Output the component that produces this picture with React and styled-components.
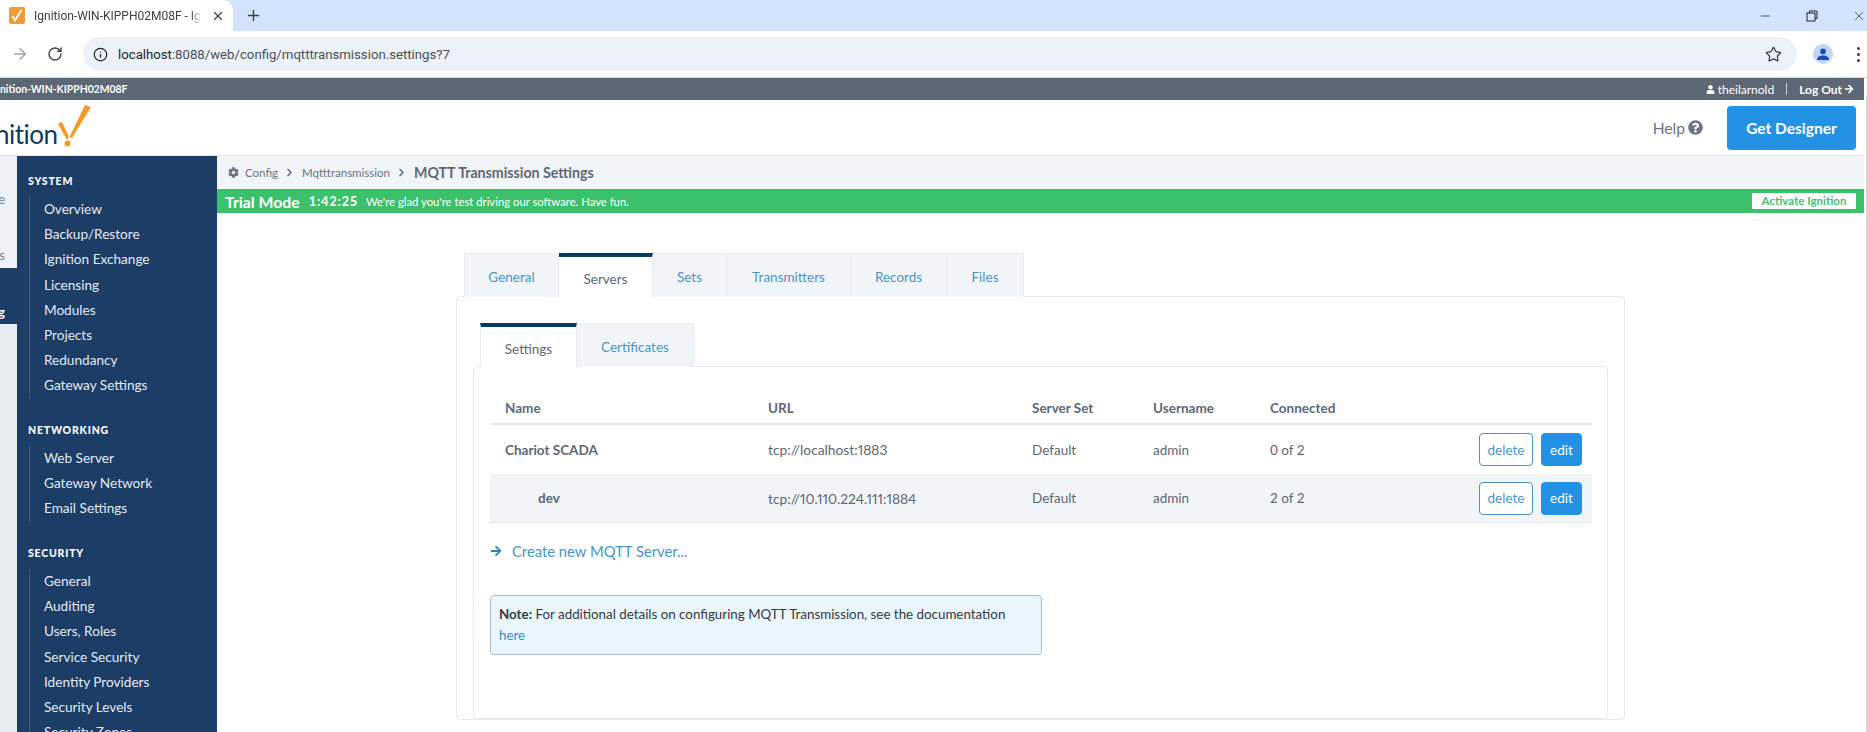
import styled, { createGlobalStyle } from "styled-components";
import { FaCog, FaUser, FaQuestionCircle, FaArrowRight, FaChevronRight } from "react-icons/fa";
import { ArrowRight, RotateCw, Info, Star, X, Plus, Minus } from "lucide-react";

const GlobalStyle = createGlobalStyle`
  html, body {
    margin: 0;
    height: 732px;
    overflow: hidden;
    background: #fff;
    font-family: "Lato", "Liberation Sans", sans-serif;
    color: #5d6776;
  }
  * { box-sizing: border-box; }
`;

const Window = styled.div`
  width: 1867px;
  height: 732px;
  overflow: hidden;
  display: flex;
  flex-direction: column;
`;

const TabStrip = styled.div`
  height: 31px;
  flex: none;
  background: #d3e3fd;
  display: flex;
  align-items: center;
`;

const BrowserTab = styled.div`
  width: 233px;
  height: 31px;
  background: #fff;
  border-top-right-radius: 10px;
  display: flex;
  align-items: center;
  padding: 0 9px;
  color: #3c4043;
  font: 12px "Roboto", sans-serif;
`;

const Favicon = styled.div`
  width: 16px;
  height: 17px;
  flex: none;
  border-radius: 2px;
  background: #ee9b3a;
  color: #fff;
  display: flex;
  align-items: center;
  justify-content: center;
  margin-right: 9px;
`;

const TabTitle = styled.span`
  width: 167px;
  flex: none;
  white-space: nowrap;
  overflow: hidden;
  mask-image: linear-gradient(to left, transparent, #000 10px);
`;

const TabClose = styled(X)`
  margin-left: 10px;
  flex: none;
`;

const NewTab = styled(Plus)`
  margin-left: 12px;
  color: #3c4043;
`;

const WindowControls = styled.div`
  margin-left: auto;
  display: flex;
  align-items: center;
  gap: 34px;
  padding-right: 1px;
  color: #202124;
`;

const Toolbar = styled.div`
  height: 47px;
  flex: none;
  background: #fff;
  border-bottom: 1px solid #d5d9de;
  display: flex;
  align-items: center;
  padding-left: 11px;
`;

const ForwardIcon = styled(ArrowRight)`
  color: #a0a4a9;
  flex: none;
`;

const ReloadIcon = styled(RotateCw)`
  color: #45494e;
  margin-left: 18px;
  flex: none;
`;

const UrlPill = styled.div`
  margin-left: 20px;
  width: 1714px;
  flex: none;
  height: 34px;
  border-radius: 17px;
  background: #edf2fa;
  display: flex;
  align-items: center;
  padding: 0 15px 0 10px;
  font: 13.2px "Roboto", sans-serif;
  color: #1f2328;
`;

const UrlHost = styled.span`
  margin-left: 10px;
`;

const UrlPath = styled.span`
  color: #4a4f55;
`;

const StarIcon = styled(Star)`
  margin-left: auto;
  color: #3c4043;
`;

const Avatar = styled.div`
  width: 20px;
  height: 20px;
  margin-left: 16px;
  border-radius: 50%;
  background: #c2d7f8;
  color: #0f4fc0;
  display: flex;
  align-items: center;
  justify-content: center;
  flex: none;
`;

const Kebab = styled.div`
  margin-left: 24px;
  display: flex;
  flex-direction: column;
  gap: 3px;
  flex: none;

  i {
    width: 3px;
    height: 3px;
    border-radius: 50%;
    background: #3c4043;
  }
`;

const PageRow = styled.div`
  flex: 1;
  min-height: 0;
  display: flex;
`;

const Page = styled.div`
  flex: 1;
  min-width: 0;
  display: flex;
  flex-direction: column;
`;

const ScrollTrack = styled.div`
  width: 3px;
  flex: none;
  margin-top: 17px;
  border-right: 1px solid #d8dce1;
`;

const StatusBar = styled.div`
  height: 22px;
  flex: none;
  background: #5d6776;
  color: #fff;
  font-size: 10.4px;
  font-weight: 700;
  display: flex;
  align-items: center;
  justify-content: space-between;
  padding-right: 10px;
`;

const UserArea = styled.div`
  display: flex;
  align-items: center;
  font-size: 12px;
`;

const UserName = styled.span`
  margin-left: 3px;
  font-weight: 400;
`;

const Divider = styled.span`
  width: 1px;
  height: 12px;
  background: #c9ced6;
  margin: 0 12px;
`;

const LogOut = styled.span`
  margin-right: 2px;
`;

const Header = styled.div`
  height: 56px;
  flex: none;
  background: #fff;
  border-bottom: 1px solid #dfe3e8;
  display: flex;
  align-items: center;
  padding-right: 8px;
`;

const Logo = styled.div`
  display: flex;
  align-items: flex-end;
  height: 50px;
  margin-left: -5px;
  color: #123a5e;
  font-size: 26px;
  line-height: 38px;
  letter-spacing: -0.5px;
`;

const LogoMark = styled.svg`
  align-self: flex-start;
  flex: none;
`;

const HelpLink = styled.div`
  margin-left: auto;
  display: flex;
  align-items: center;
  gap: 3px;
  font-size: 15.6px;
  color: #6b7480;
`;

const DesignerButton = styled.div`
  margin-left: 24px;
  width: 129px;
  height: 44px;
  border-radius: 4px;
  background: #2492e4;
  color: #fff;
  font-size: 15.5px;
  font-weight: 700;
  display: flex;
  align-items: center;
  justify-content: center;
`;

const Main = styled.div`
  flex: 1;
  min-height: 0;
  display: flex;
`;

const Rail = styled.div`
  width: 17px;
  flex: none;
  background: #e8edf2;
  display: flex;
  flex-direction: column;
  overflow: hidden;
`;

const RailItem = styled.div`
  height: ${(p) => p.$h}px;
  background: ${(p) => (p.$active ? "#1b3d66" : "#eef1f5")};
  color: ${(p) => (p.$active ? "#fff" : "#7a8390")};
  font-size: 13px;
  font-weight: ${(p) => (p.$active ? 700 : 400)};
  display: flex;
  justify-content: flex-end;
  align-items: ${(p) => (p.$active ? "flex-end" : "center")};
  padding-right: 12px;
  padding-bottom: ${(p) => (p.$active ? 4 : 0)}px;
  white-space: nowrap;
`;

const Sidebar = styled.div`
  width: 200px;
  flex: none;
  background: #1b3d66;
  overflow: hidden;
  padding: 15px 0 0 11px;
`;

const NavGroup = styled.div`
  margin-bottom: 21.5px;
`;

const NavHeading = styled.div`
  color: #fff;
  font-size: 10.5px;
  font-weight: 900;
  letter-spacing: 0.8px;
  line-height: 20px;
`;

const NavList = styled.div`
  margin: 6px 0 0 1px;
  border-left: 1px solid #3f5d82;
  padding-left: 14px;
`;

const NavItem = styled.div`
  height: 25.2px;
  line-height: 25.2px;
  font-size: 13.6px;
  color: #e4eaf1;
`;

const Content = styled.div`
  flex: 1;
  min-width: 0;
  display: flex;
  flex-direction: column;
`;

const Breadcrumb = styled.div`
  height: 33px;
  flex: none;
  background: #f2f5f8;
  display: flex;
  align-items: center;
  padding-left: 11px;
  font-size: 11.5px;
  color: #6b7480;
`;

const Crumb = styled.span`
  margin-left: ${(p) => p.$gap || 0}px;
`;

const CrumbArrow = styled(FaChevronRight)`
  font-size: 9px;
  margin: 0 8px 0 7px;
  color: #5d6776;
`;

const CrumbTitle = styled.span`
  font-size: 14.2px;
  font-weight: 700;
  color: #5d6776;
`;

const TrialBar = styled.div`
  height: 24px;
  flex: none;
  background: #3bc06b;
  color: #fff;
  display: flex;
  align-items: center;
  padding: 0 8px;
`;

const TrialLabel = styled.span`
  font-size: 15.8px;
  font-weight: 700;
`;

const TrialTime = styled.span`
  margin-left: 9px;
  font-size: 13px;
  font-weight: 700;
  letter-spacing: 0.7px;
`;

const TrialText = styled.span`
  margin-left: 8px;
  font-size: 11.3px;
`;

const ActivateButton = styled.span`
  margin-left: auto;
  width: 104px;
  height: 16px;
  line-height: 16px;
  background: #fff;
  color: #4fbb78;
  font-size: 11.5px;
  font-weight: 700;
  text-align: center;
  border-radius: 1px;
`;

const Body = styled.div`
  width: 1169px;
  margin: 40px auto 0;
  flex: none;
`;

const Tabs = styled.div`
  display: flex;
  margin-left: ${(p) => p.$indent}px;
`;

const Tab = styled.div`
  width: ${(p) => p.$w}px;
  height: ${(p) => p.$h}px;
  display: flex;
  align-items: center;
  justify-content: center;
  padding-top: 3px;
  font-size: 13.5px;
  background: ${(p) => (p.$active ? "#fff" : "#f2f5f8")};
  color: ${(p) => (p.$active ? "#5d6776" : "#4b94c3")};
  border: 1px solid #e8ecf0;
  border-bottom: none;
  border-left-width: ${(p) => (p.$first ? 1 : 0)}px;
  border-top: ${(p) => (p.$active ? "4px solid #0d3a5c" : "1px solid #e8ecf0")};
  margin-bottom: -1px;
  position: relative;
`;

const Panel = styled.div`
  border: 1px solid #e6eaef;
  border-radius: 4px;
  background: #fff;
  padding: ${(p) => p.$pad};
  height: ${(p) => p.$h}px;
`;

const TableRow = styled.div`
  display: grid;
  grid-template-columns: 263px 264px 121px 117px 1fr auto;
  align-items: center;
  height: ${(p) => p.$h}px;
  padding: 0 10px 0 15px;
  font-size: 13.5px;
  background: ${(p) => (p.$shaded ? "#f2f5f8" : "#fff")};
  border-bottom: ${(p) => p.$rule};
  font-weight: ${(p) => (p.$head ? 700 : 400)};
`;

const NameCell = styled.span`
  font-weight: 700;
  padding-left: ${(p) => p.$indent || 0}px;
`;

const UrlCell = styled.span`
  font-size: 13.8px;
  font-feature-settings: "pnum";
`;

const Actions = styled.div`
  display: flex;
  gap: 8px;
`;

const RowButton = styled.div`
  width: ${(p) => p.$w}px;
  height: 33px;
  border-radius: 4px;
  display: flex;
  align-items: center;
  justify-content: center;
  font-size: 13.5px;
  border: 1px solid ${(p) => (p.$solid ? "#2492e4" : "#4b94c3")};
  background: ${(p) => (p.$solid ? "#2492e4" : "#fff")};
  color: ${(p) => (p.$solid ? "#fff" : "#4b94c3")};
`;

const CreateLink = styled.div`
  display: flex;
  align-items: center;
  margin-top: 16px;
  height: 24px;
  font-size: 14.8px;
  color: #4b94c3;
`;

const CreateArrow = styled(FaArrowRight)`
  font-size: 12px;
  margin-right: 10px;
  color: #2b85bd;
`;

const Note = styled.div`
  margin-top: 32px;
  width: 552px;
  height: 60px;
  border: 1px solid #a9bccb;
  border-radius: 4px;
  background: #eaf6fd;
  padding: 8px;
  font-size: 13.35px;
  line-height: 21px;
  color: #333a42;
`;

const NoteLink = styled.div`
  color: #3b8bbd;
`;

const servers = [
  { name: "Chariot SCADA", url: "tcp://localhost:1883", connected: "0 of 2" },
  { name: "dev", url: "tcp://10.110.224.111:1884", connected: "2 of 2", child: true },
];

const navGroups = [
  {
    title: "SYSTEM",
    items: ["Overview", "Backup/Restore", "Ignition Exchange", "Licensing", "Modules", "Projects", "Redundancy", "Gateway Settings"],
  },
  { title: "NETWORKING", items: ["Web Server", "Gateway Network", "Email Settings"] },
  {
    title: "SECURITY",
    items: ["General", "Auditing", "Users, Roles", "Service Security", "Identity Providers", "Security Levels", "Security Zones"],
  },
];

const outerTabs = [
  ["General", 95],
  ["Servers", 94],
  ["Sets", 74],
  ["Transmitters", 124],
  ["Records", 96],
  ["Files", 77],
];

function App() {
  return (
    <Window>
      <GlobalStyle />
      <TabStrip>
        <BrowserTab>
          <Favicon>
            <svg width="12" height="13" viewBox="0 0 12 13">
              <path d="M1.5 7 L4 11.5 L10.5 1" fill="none" stroke="#fff" strokeWidth="1.8" />
            </svg>
          </Favicon>
          <TabTitle>Ignition-WIN-KIPPH02M08F - Ignition</TabTitle>
          <TabClose size={14} strokeWidth={2.2} />
        </BrowserTab>
        <NewTab size={17} />
        <WindowControls>
          <Minus size={14} strokeWidth={1.2} />
          <svg width="12" height="12" viewBox="0 0 12 12" fill="none" stroke="currentColor">
            <rect x="1" y="3" width="8" height="8" />
            <path d="M3.5 3 V1 H11 V8.5 H9" />
          </svg>
          <X size={14} strokeWidth={1.2} />
        </WindowControls>
      </TabStrip>
      <Toolbar>
        <ForwardIcon size={18} />
        <ReloadIcon size={16} strokeWidth={2.2} />
        <UrlPill>
          <Info size={15} />
          <UrlHost>
            localhost<UrlPath>:8088/web/config/mqtttransmission.settings?7</UrlPath>
          </UrlHost>
          <StarIcon size={17} strokeWidth={1.8} />
        </UrlPill>
        <Avatar>
          <svg width="12" height="12" viewBox="0 0 12 12" fill="currentColor">
            <circle cx="6" cy="3.4" r="2.8" />
            <path d="M0 12 C0 8.4 3 7.4 6 7.4 S12 8.4 12 12 Z" />
          </svg>
        </Avatar>
        <Kebab>
          <i />
          <i />
          <i />
        </Kebab>
      </Toolbar>
      <PageRow>
        <Page>
          <StatusBar>
            <span>nition-WIN-KIPPH02M08F</span>
            <UserArea>
              <FaUser size={9} />
              <UserName>theilarnold</UserName>
              <Divider />
              <LogOut>Log Out</LogOut>
              <FaArrowRight size={10} />
            </UserArea>
          </StatusBar>
          <Header>
            <Logo>
              nition
              <LogoMark width="34" height="48" viewBox="0 0 34 48">
                <path d="M0 21 L4 19 L11 34 L9 37 Z" fill="#f39a2b" />
                <path d="M27 2 L33 4 L14 35 L11.5 34 Z" fill="#f39a2b" />
                <circle cx="9.5" cy="40.5" r="3" fill="#f39a2b" />
              </LogoMark>
            </Logo>
            <HelpLink>
              Help
              <FaQuestionCircle size={15} />
            </HelpLink>
            <DesignerButton>Get Designer</DesignerButton>
          </Header>
          <Main>
            <Rail>
              <RailItem $h={30} />
              <RailItem $h={26}>Home</RailItem>
              <RailItem $h={30} />
              <RailItem $h={26}>Status</RailItem>
              <RailItem $h={56} $active>
                Config
              </RailItem>
            </Rail>
            <Sidebar>
              {navGroups.map((group) => (
                <NavGroup key={group.title}>
                  <NavHeading>{group.title}</NavHeading>
                  <NavList>
                    {group.items.map((item) => (
                      <NavItem key={item}>{item}</NavItem>
                    ))}
                  </NavList>
                </NavGroup>
              ))}
            </Sidebar>
            <Content>
              <Breadcrumb>
                <FaCog size={11} />
                <Crumb $gap={6}>Config</Crumb>
                <CrumbArrow />
                <Crumb>Mqtttransmission</Crumb>
                <CrumbArrow />
                <CrumbTitle>MQTT Transmission Settings</CrumbTitle>
              </Breadcrumb>
              <TrialBar>
                <TrialLabel>Trial Mode</TrialLabel>
                <TrialTime>1:42:25</TrialTime>
                <TrialText>We're glad you're test driving our software. Have fun.</TrialText>
                <ActivateButton>Activate Ignition</ActivateButton>
              </TrialBar>
              <Body>
                <Tabs $indent={8}>
                  {outerTabs.map(([label, w], i) => (
                    <Tab key={label} $w={w} $h={44} $first={i === 0} $active={label === "Servers"}>
                      {label}
                    </Tab>
                  ))}
                </Tabs>
                <Panel $pad="26px 16px 0">
                  <Tabs $indent={7}>
                    <Tab $w={97} $h={44} $first $active>
                      Settings
                    </Tab>
                    <Tab $w={117} $h={44}>
                      Certificates
                    </Tab>
                  </Tabs>
                  <Panel $pad="25px 15px 0 16px" $h={353}>
                    <TableRow $h={33} $head $rule="2px solid #e3e8ed">
                      <span>Name</span>
                      <span>URL</span>
                      <span>Server Set</span>
                      <span>Username</span>
                      <span>Connected</span>
                    </TableRow>
                    {servers.map((s) => (
                      <TableRow key={s.name} $h={49} $shaded={s.child} $rule={s.child ? "1px solid #e3e8ed" : "none"}>
                        <NameCell $indent={s.child ? 33 : 0}>{s.name}</NameCell>
                        <UrlCell>{s.url}</UrlCell>
                        <span>Default</span>
                        <span>admin</span>
                        <span>{s.connected}</span>
                        <Actions>
                          <RowButton $w={54}>delete</RowButton>
                          <RowButton $w={41} $solid>
                            edit
                          </RowButton>
                        </Actions>
                      </TableRow>
                    ))}
                    <CreateLink>
                      <CreateArrow />
                      Create new MQTT Server...
                    </CreateLink>
                    <Note>
                      <b>Note:</b> For additional details on configuring MQTT Transmission, see the documentation
                      <NoteLink>here</NoteLink>
                    </Note>
                  </Panel>
                </Panel>
              </Body>
            </Content>
          </Main>
        </Page>
        <ScrollTrack />
      </PageRow>
    </Window>
  );
}

export default App;
